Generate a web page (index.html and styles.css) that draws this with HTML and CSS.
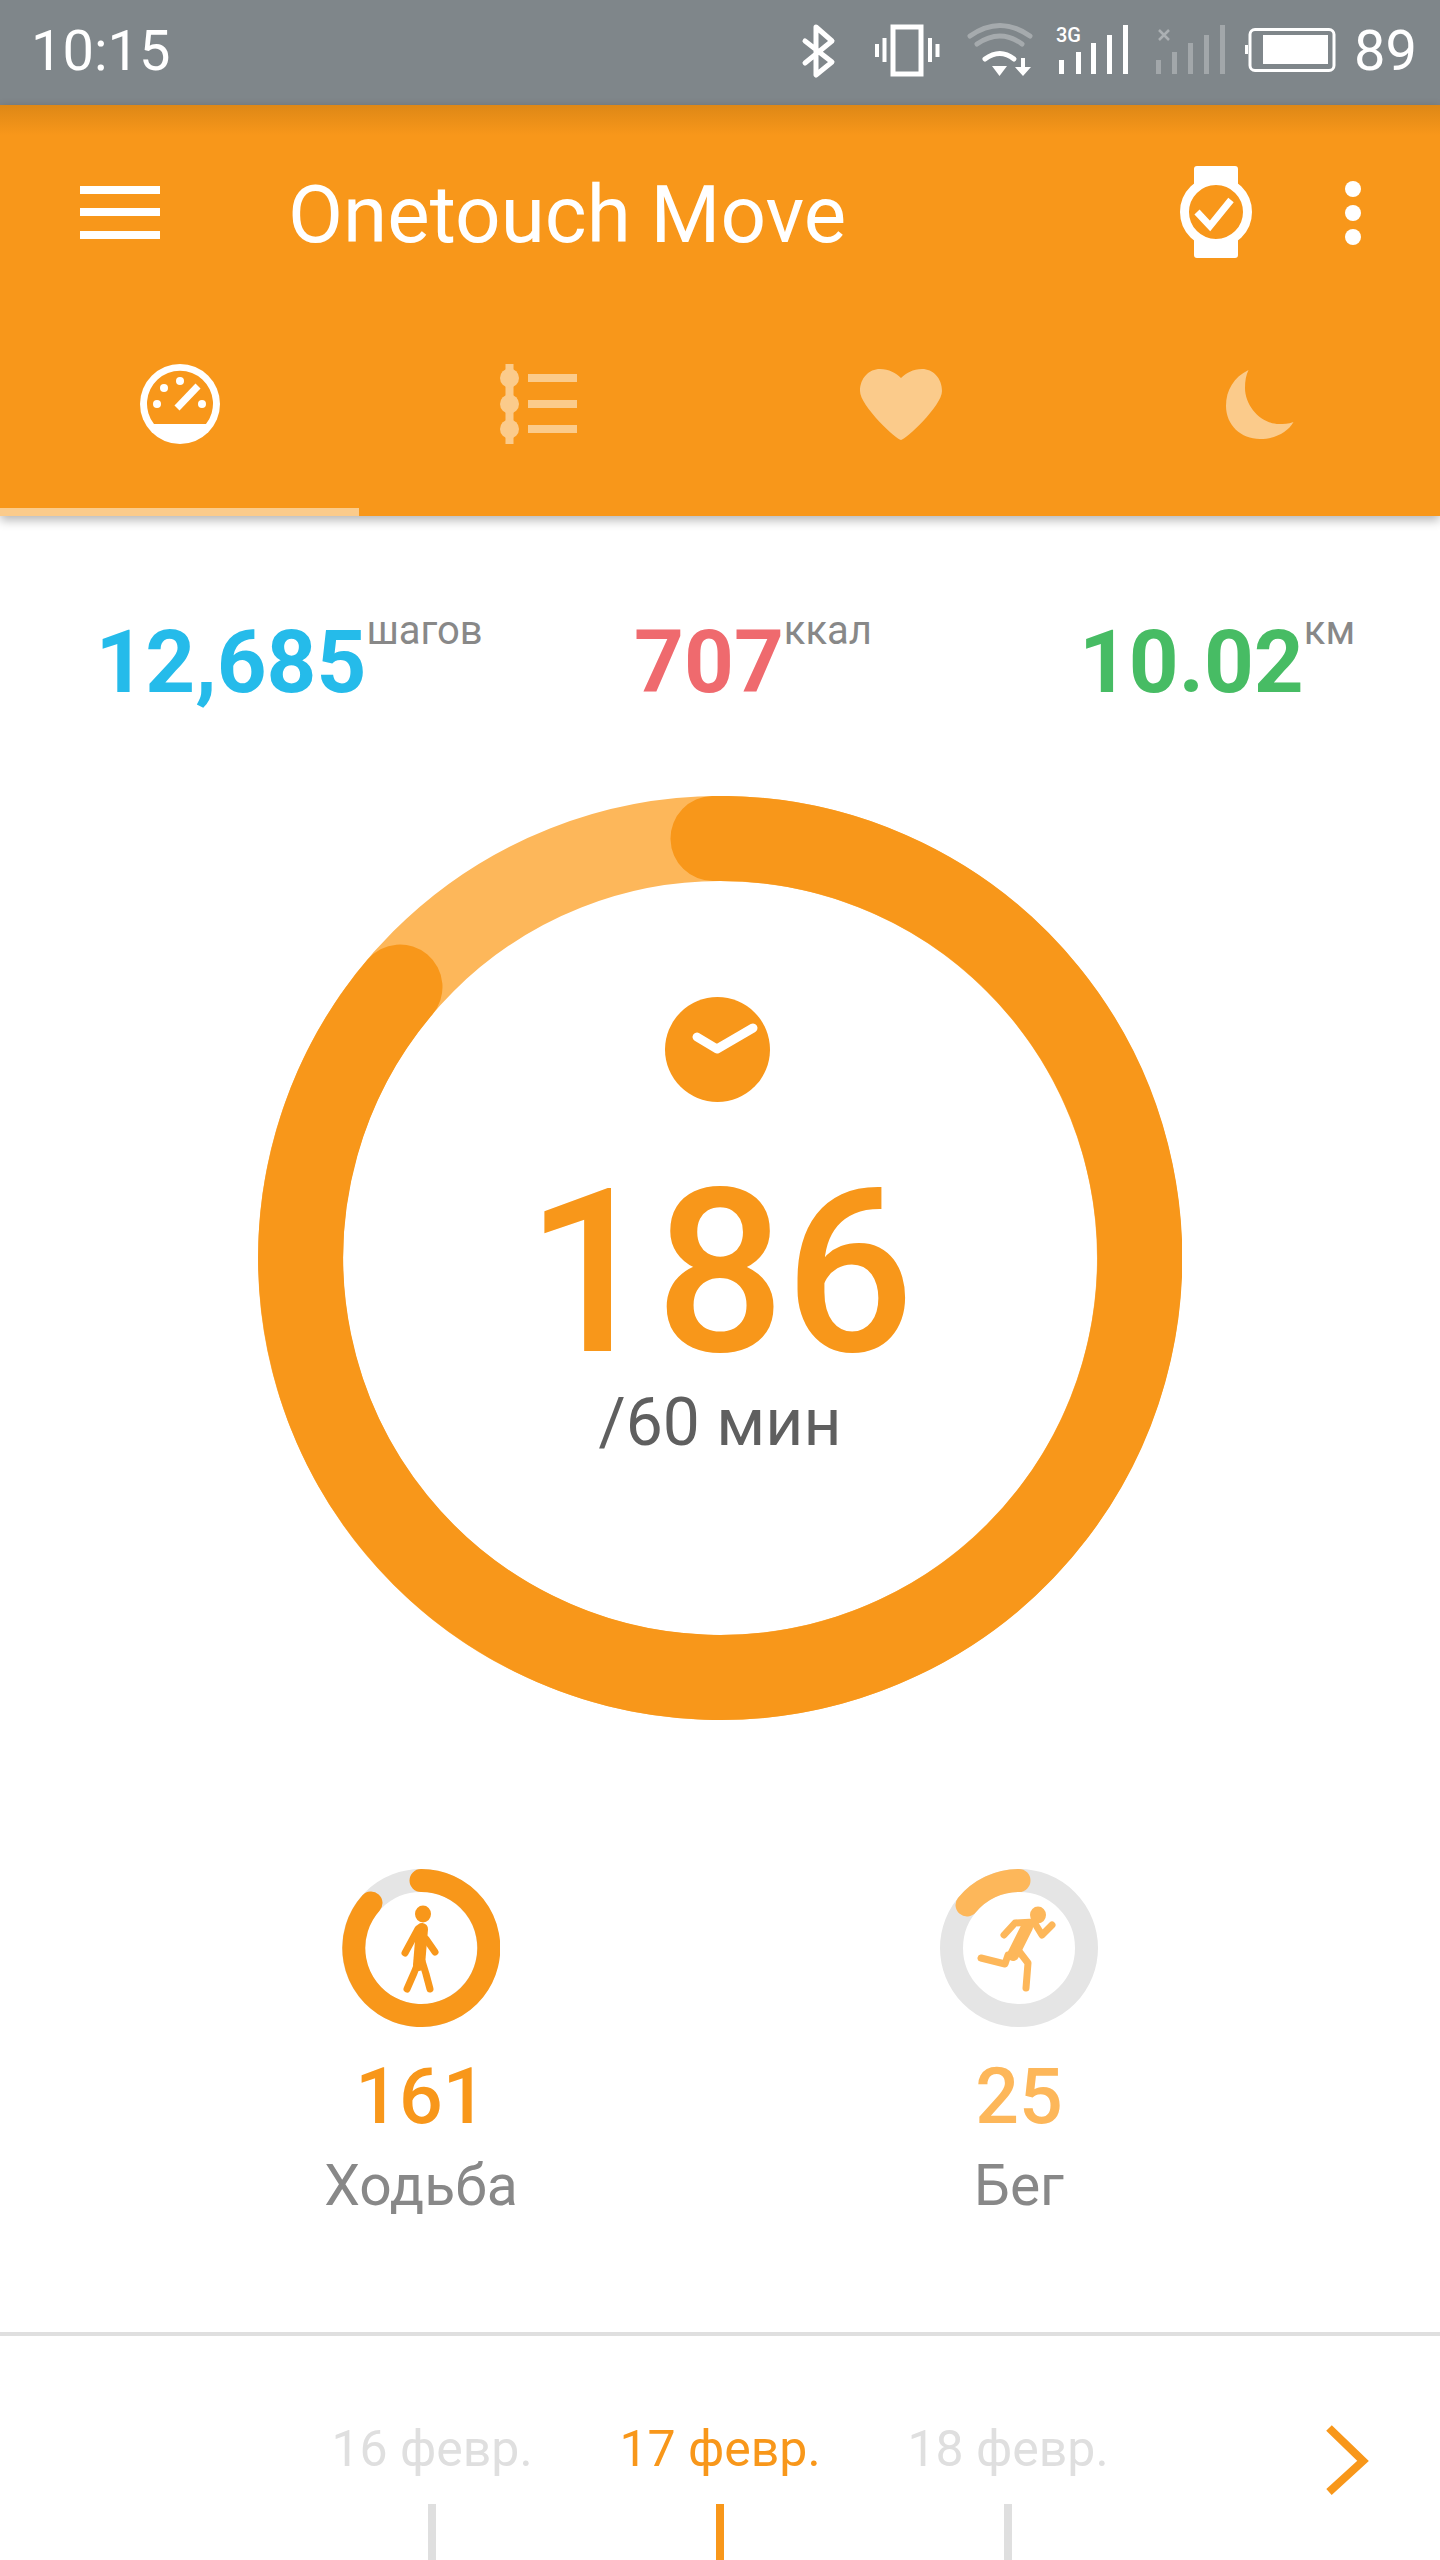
FILE: index.html
```html
<!DOCTYPE html>
<html lang="ru">
<head>
    <meta charset="UTF-8">
    <meta name="viewport" content="width=device-width, initial-scale=1.0">
    <title>Onetouch Move</title>
    <link rel="stylesheet" href="styles.css">
</head>
<body>
    <div class="status-bar">
        <span class="status-time">10:15</span>
        <svg class="status-icons" width="540" height="105" viewBox="800 0 540 105">
            <path d="M805 41 L832 62 L816 75 L816 27 L832 41 L805 63" fill="none" stroke="#fff" stroke-width="5" stroke-linejoin="round" stroke-linecap="round"/>
            <rect x="893" y="27" width="28" height="47" fill="none" stroke="#fff" stroke-width="5"/>
            <path d="M884.5 38 V62 M877 44 V57 M930 38 V62 M937.500 44 V57" stroke="#fff" stroke-width="4" fill="none"/>
            <g fill="none" stroke-linecap="round">
                <path d="M970 36 Q1000 15 1030 36" stroke="#fff" stroke-opacity=".3" stroke-width="5"/>
                <path d="M977 44 Q1000 28 1022 44" stroke="#fff" stroke-opacity=".3" stroke-width="5"/>
                <path d="M985 59 Q1000 48 1014 59" stroke="#fff" stroke-width="5"/>
            </g>
            <path d="M992 66 H1007 L999.500 76 Z" fill="#fff"/>
            <path d="M1021 58 H1025 V67 H1031 L1023 76 L1015 67 H1021 Z" fill="#fff"/>
            <text x="1056" y="42" class="net-label">3G</text>
            <g fill="#fff">
                <rect x="1059" y="60" width="5" height="14"/>
                <rect x="1076" y="52" width="5" height="22"/>
                <rect x="1091" y="43" width="5" height="31"/>
                <rect x="1107" y="35" width="5" height="39"/>
                <rect x="1123" y="25" width="5" height="49"/>
            </g>
            <g fill="#fff" fill-opacity=".28">
                <rect x="1156" y="60" width="5" height="14"/>
                <rect x="1172" y="52" width="5" height="22"/>
                <rect x="1188" y="43" width="5" height="31"/>
                <rect x="1204" y="35" width="5" height="39"/>
                <rect x="1220" y="25" width="5" height="49"/>
            </g>
            <path d="M1159 30 L1169 40 M1169 30 L1159 40" stroke="#fff" stroke-opacity=".35" stroke-width="2.500"/>
            <rect x="1250" y="29.500" width="84" height="41" rx="5" fill="none" stroke="#fff" stroke-width="3"/>
            <rect x="1245" y="45" width="3" height="9" fill="#fff"/>
            <rect x="1263" y="35" width="65" height="29" fill="#fff"/>
        </svg>
        <span class="status-battery">89</span>
    </div>

    <header class="app-bar">
        <div class="toolbar">
            <div class="menu-icon"><span></span><span></span><span></span></div>
            <div class="app-title">Onetouch Move</div>
            <svg class="watch-icon" width="72" height="92" viewBox="0 0 72 92">
                <path d="M14 3 Q14 0 17 0 H55 Q58 0 58 3 V20 H14 Z M14 72 H58 V89 Q58 92 55 92 H17 Q14 92 14 89 Z" fill="#fff"/>
                <circle cx="36" cy="46" r="31.500" fill="#f8971a" stroke="#fff" stroke-width="9"/>
                <path d="M17 46 L30 60 L51 34" fill="none" stroke="#fff" stroke-width="7"/>
            </svg>
            <div class="more-icon"><span></span><span></span><span></span></div>
        </div>
        <nav class="tabs">
            <div class="tab tab-active">
                <svg width="80" height="80" viewBox="0 0 80 80">
                    <circle cx="40" cy="40" r="40" fill="#fff"/>
                    <path d="M14 60 A33 33 0 1 1 66 60 Z" fill="#f8971a"/>
                    <circle cx="40" cy="17" r="4" fill="#fff"/>
                    <circle cx="24" cy="24" r="4" fill="#fff"/>
                    <circle cx="17" cy="40" r="4" fill="#fff"/>
                    <circle cx="62" cy="40" r="4" fill="#fff"/>
                    <path d="M37 44 L58 22" stroke="#fff" stroke-width="7"/>
                </svg>
            </div>
            <div class="tab tab-timeline">
                <svg width="77" height="80" viewBox="0 0 77 80">
                    <g fill="#fbcb8b">
                        <rect x="5.500" y="0" width="8" height="80"/>
                        <ellipse cx="9.500" cy="14" rx="9.500" ry="9.500"/>
                        <ellipse cx="9.500" cy="40" rx="9.500" ry="9.500"/>
                        <ellipse cx="9.500" cy="65" rx="9.500" ry="9.500"/>
                        <rect x="28" y="10" width="49" height="8"/>
                        <rect x="28" y="36" width="49" height="8"/>
                        <rect x="28" y="61" width="49" height="8"/>
                    </g>
                </svg>
            </div>
            <div class="tab">
                <svg width="82" height="71" viewBox="0 0 82 71">
                    <path d="M41 71 C37 71 0 37 0 22 C0 9 9 0 20 0 C29 0 36 4 41 9 C46 4 53 0 62 0 C73 0 82 9 82 22 C82 37 45 71 41 71 Z" fill="#fbcb8b"/>
                </svg>
            </div>
            <div class="tab">
                <svg width="68" height="69" viewBox="0 0 68 69">
                    <path d="M22.500 0 C8 7 0 20 0 36 C0 55 15 69 34 69 C49 69 62 62 67.500 52 C62 54 58 54 53 54 C35 54 19 36 19 18 C19 11 20 5 22.500 0 Z" fill="#fbcb8b"/>
                </svg>
            </div>
        </nav>
    </header>

    <main class="content">
        <section class="stats">
            <div class="stat stat-steps">12,685<span class="stat-unit">шагов</span></div>
            <div class="stat stat-kcal">707<span class="stat-unit">ккал</span></div>
            <div class="stat stat-dist">10.02<span class="stat-unit">км</span></div>
        </section>

        <section class="goal">
            <svg class="goal-ring" width="924" height="924" viewBox="0 0 924 924">
                <circle cx="462" cy="462" r="419.500" fill="none" stroke="#fdb75a" stroke-width="85"/>
                <path d="M455 42.500 A419.500 419.500 0 1 1 142 191" fill="none" stroke="#f8971a" stroke-width="85" stroke-linecap="round"/>
            </svg>
            <div class="goal-text">
                <svg class="goal-clock" width="105" height="105" viewBox="0 0 105 105">
                    <circle cx="52.500" cy="52.500" r="52.500" fill="#f8971a"/>
                    <path d="M32 40 L52 52 L88 31" fill="none" stroke="#fff" stroke-width="9" stroke-linecap="round" stroke-linejoin="round"/>
                </svg>
                <div class="goal-value">186</div>
                <div class="goal-label">/60 мин</div>
            </div>
        </section>

        <section class="activities">
            <div class="activity">
                <svg width="158" height="158" viewBox="0 0 158 158">
                    <circle cx="79" cy="79" r="67.500" fill="none" stroke="#e5e5e5" stroke-width="23"/>
                    <path d="M79 11.500 A67.500 67.500 0 1 1 29 34" fill="none" stroke="#f8971a" stroke-width="23" stroke-linecap="round"/>
                    <ellipse cx="81" cy="45" rx="8" ry="8.500" fill="#f8971a"/>
                    <g fill="none" stroke="#f8971a" stroke-linecap="round" stroke-linejoin="round">
                        <path d="M80 60 L77 96" stroke-width="12"/>
                        <path d="M76 60 L63 84 M84 70 L93 83 M76 94 L72 104 L65 120 M80 92 L84 105 L88 120" stroke-width="7"/>
                    </g>
                </svg>
                <div class="activity-value">161</div>
                <div class="activity-label">Ходьба</div>
            </div>
            <div class="activity activity-run">
                <svg width="158" height="158" viewBox="0 0 158 158">
                    <circle cx="79" cy="79" r="67.500" fill="none" stroke="#e5e5e5" stroke-width="23"/>
                    <path d="M79 11.500 A67.500 67.500 0 0 0 27 36" fill="none" stroke="#fdb75a" stroke-width="23" stroke-linecap="round"/>
                    <ellipse cx="98" cy="46" rx="8" ry="8.500" fill="#fdb75a"/>
                    <g fill="none" stroke="#fdb75a" stroke-linecap="round" stroke-linejoin="round">
                        <path d="M87 58 L73 86" stroke-width="12"/>
                        <path d="M64 66 L75 54 L94 53 L102 66 L112 56 M68 86 L65 95 L41 89 M78 81 L88 94 L86 119" stroke-width="7"/>
                    </g>
                </svg>
                <div class="activity-value">25</div>
                <div class="activity-label">Бег</div>
            </div>
        </section>

        <div class="divider"></div>

        <section class="dates">
            <div class="date"><span>16 февр.</span><i class="date-tick"></i></div>
            <div class="date date-active"><span>17 февр.</span><i class="date-tick"></i></div>
            <div class="date"><span>18 февр.</span><i class="date-tick"></i></div>
            <svg class="date-next" width="44" height="70" viewBox="0 0 44 70">
                <path d="M4 3 L38 36 L4 67" fill="none" stroke="#f8971a" stroke-width="8"/>
            </svg>
        </section>
    </main>
</body>
</html>
```

FILE: styles.css
```css
* {
    box-sizing: border-box;
    margin: 0;
    padding: 0;
}

body {
    font-family: 'Roboto', 'Liberation Sans', sans-serif;
    background-color: white;
    width: 1440px;
    height: 2560px;
    overflow: hidden;
}

.status-bar {
    display: flex;
    align-items: flex-start;
    height: 105px;
    background-color: #7f868a;
    color: white;
    font-size: 56px;
    line-height: 102px;
}

.status-time {
    margin-left: 31px;
    margin-right: auto;
}

.status-battery {
    margin-left: 14px;
    margin-right: 23px;
}

.net-label {
    font-size: 20px;
    font-weight: 500;
    fill: white;
}

.app-bar {
    background: linear-gradient(#de8816, #f8971a 30px);
    box-shadow: 0 4px 10px rgba(0, 0, 0, 0.3);
    position: relative;
}

.toolbar {
    display: flex;
    align-items: center;
    height: 214px;
    padding-left: 80px;
}

.menu-icon {
    display: flex;
    flex-direction: column;
    gap: 14.5px;
    width: 80px;
    margin-right: 128px;
}

.menu-icon span {
    display: block;
    height: 8px;
    background-color: white;
}

.app-title {
    color: white;
    font-size: 80px;
    margin-top: 6px;
    margin-right: auto;
}

.watch-icon {
    margin-right: 93px;
}

.more-icon {
    display: flex;
    flex-direction: column;
    gap: 8px;
    margin-top: 2px;
    margin-right: 79px;
}

.more-icon span {
    display: block;
    width: 16px;
    height: 16px;
    border-radius: 50%;
    background-color: white;
}

.tabs {
    display: flex;
}

.tab {
    flex: 1;
    display: flex;
    justify-content: center;
    align-items: center;
    height: 197px;
    padding-bottom: 27px;
}

.tab-timeline {
    padding-right: 3px;
}

.tab-active {
    border-bottom: 8px solid #fbcb8b;
    padding-bottom: 19px;
}

.stats {
    display: grid;
    grid-template-columns: repeat(3, 464px);
    margin-left: 57px;
    padding-top: 96px;
}

.stat {
    font-size: 87px;
    font-weight: 700;
    line-height: 100px;
    text-align: center;
    white-space: nowrap;
}

.stat-steps {
    color: #25bbea;
}

.stat-kcal {
    color: #ef6a6e;
}

.stat-dist {
    color: #47bc64;
}

.stat-unit {
    color: #888;
    font-size: 40px;
    font-weight: 400;
    line-height: 0;
    vertical-align: 48px;
}

.goal {
    display: grid;
    justify-content: center;
    margin-top: 84px;
}

.goal-ring,
.goal-text {
    grid-area: 1 / 1;
}

.goal-text {
    display: flex;
    flex-direction: column;
    align-items: center;
    padding-top: 201px;
}

.goal-clock {
    margin-right: 5px;
}

.goal-value {
    color: #f8971a;
    font-size: 228px;
    font-weight: 500;
    line-height: 200px;
    margin-top: 71px;
}

.goal-label {
    color: #5f5f5f;
    font-size: 66px;
    line-height: 64px;
    margin-top: 18px;
}

.activities {
    display: grid;
    grid-template-columns: repeat(2, 598px);
    padding-left: 122px;
    margin-top: 149px;
}

.activity {
    display: flex;
    flex-direction: column;
    align-items: center;
}

.activity-value {
    color: #f8971a;
    font-size: 77px;
    font-weight: 500;
    line-height: 90px;
    margin-top: 25px;
}

.activity-run .activity-value {
    color: #fdb75a;
}

.activity-label {
    color: #888;
    font-size: 57px;
    line-height: 64px;
    margin-top: 12px;
}

.divider {
    height: 4px;
    background-color: #dfdfdf;
    margin-top: 114px;
}

.dates {
    display: flex;
    padding-left: 288px;
    margin-top: 85px;
}

.date {
    display: flex;
    flex-direction: column;
    align-items: center;
    width: 288px;
    color: #dfdfdf;
    font-size: 50px;
    line-height: 56px;
}

.date-tick {
    display: block;
    width: 8px;
    height: 60px;
    margin-top: 27px;
    background-color: #dfdfdf;
}

.date-active {
    color: #f8971a;
}

.date-active .date-tick {
    background-color: #f8971a;
}

.date-next {
    margin-left: 173px;
    margin-top: 4px;
}
```
